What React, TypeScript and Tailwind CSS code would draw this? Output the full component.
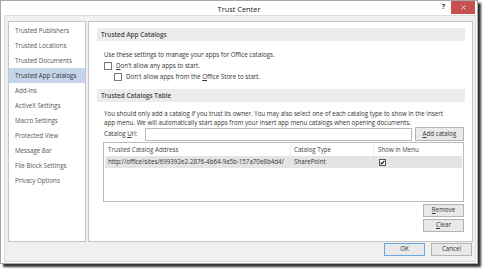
import type { ReactNode } from "react"

const navItems = [
  "Trusted Publishers",
  "Trusted Locations",
  "Trusted Documents",
  "Trusted App Catalogs",
  "Add-ins",
  "ActiveX Settings",
  "Macro Settings",
  "Protected View",
  "Message Bar",
  "File Block Settings",
  "Privacy Options",
]

function Key({ children }: { children: ReactNode }) {
  return <span className="underline decoration-[0.5px] underline-offset-[1px]">{children}</span>
}

function CheckBox({ checked = false }: { checked?: boolean }) {
  return (
    <span
      className={
        "flex shrink-0 items-center justify-center border bg-white " +
        (checked ? "size-[7px] border-[#555]" : "size-[8px] border-[#7a7a7a]")
      }
    >
      {checked && (
        <svg viewBox="0 0 8 8" className="size-[5px]">
          <path d="M1 4.2 L3 6.2 L7 1.5" fill="none" stroke="#111" strokeWidth="1.8" />
        </svg>
      )}
    </span>
  )
}

function Btn({ children, primary = false }: { children: ReactNode; primary?: boolean }) {
  return (
    <button
      className={
        "flex h-[13px] w-[41px] items-center justify-center border bg-[#e9e9e9] text-[6.2px] leading-none text-[#333] " +
        (primary ? "border-[#6aa6e0]" : "border-[#b4b4b4]")
      }
    >
      {children}
    </button>
  )
}

function SectionBar({ children }: { children: ReactNode }) {
  return (
    <div className="h-[13px] bg-[#ececec] pl-[4px] text-[6.4px] font-semibold leading-[13px] text-[#444]">
      {children}
    </div>
  )
}

export default function App() {
  return (
    <div className="h-[269px] w-[484px] overflow-hidden bg-white font-['Open_Sans',sans-serif] text-[6.2px] text-[#333]">
      <div className="flex h-[264px] w-[478px] flex-col border border-[#a8a8a8] bg-white shadow-[3px_3px_2px_rgba(0,0,0,0.8)]">
        {/* title bar */}
        <div className="grid h-[14px] shrink-0 grid-cols-[1fr_auto_1fr]">
          <div />
          <div className="pt-[2px] text-[7.4px] leading-[12px] text-[#222]">Trust Center</div>
          <div className="flex items-start justify-end pr-[2px]">
            <span className="mr-[6px] mt-[1px] text-[7px] font-bold leading-[10px] text-[#333]">?</span>
            <div className="flex h-[13px] w-[24px] items-center justify-center bg-[#c75050]">
              <svg viewBox="0 0 8 8" className="size-[5px]">
                <path d="M1 1 L7 7 M7 1 L1 7" stroke="#fff" strokeWidth="1.2" />
              </svg>
            </div>
          </div>
        </div>

        {/* client area */}
        <div className="mb-[1px] ml-[3px] mr-[1px] flex flex-1 flex-col border border-[#dcdcdc] bg-[#f0f0f0] pl-[3px] pr-[2px] pt-[5px]">
          <div className="flex h-[221px] gap-[2px]">
            {/* nav */}
            <div className="w-[78px] shrink-0 border border-[#c6c6c6] bg-white pt-[1px]">
              {navItems.map((item) => (
                <div
                  key={item}
                  className={
                    "h-[15px] pl-[6px] leading-[15px] " +
                    (item === "Trusted App Catalogs" ? "bg-[#c5d5ea] text-[#333]" : "text-[#555]")
                  }
                >
                  {item}
                </div>
              ))}
            </div>

            {/* main panel */}
            <div className="flex flex-1 flex-col border border-[#c6c6c6] bg-white pl-[8px] pr-[7px] pt-[6px]">
              <SectionBar>Trusted App Catalogs</SectionBar>
              <div className="flex flex-col pl-[7px] pt-[8px]">
                <div className="h-[11px] leading-[11px]">
                  Use these settings to manage your apps for Office catalogs.
                </div>
                <div className="flex h-[11px] items-center gap-[4px]">
                  <CheckBox />
                  <span>
                    <Key>D</Key>on't allow any apps to start.
                  </span>
                </div>
                <div className="flex h-[11px] items-center gap-[4px] pl-[10px]">
                  <CheckBox />
                  <span>
                    Don't allow apps from the <Key>O</Key>ffice Store to start.
                  </span>
                </div>
              </div>

              <div className="mt-[7px]">
                <SectionBar>Trusted Catalogs Table</SectionBar>
              </div>
              <div className="flex flex-col pl-[7px] pr-[1px]">
                <p className="mt-[7px] leading-[9px]">
                  You should only add a catalog if you trust its owner. You may also select one of each catalog type to show in the insert
                  <br />
                  app menu. We will automatically start apps from your insert app menu catalogs when opening documents.
                </p>
                <div className="flex h-[14px] items-center">
                  <span className="w-[41px] shrink-0">
                    Catalog <Key>U</Key>rl:
                  </span>
                  <div className="h-[13px] flex-1 border border-[#b9b9b9] bg-white" />
                  <div className="ml-[3px] flex h-[14px] w-[49px] items-center justify-center border border-[#b4b4b4] bg-[#e9e9e9]">
                    <Key>A</Key>dd catalog
                  </div>
                </div>

                {/* table */}
                <div className="-ml-[1px] mt-[1px] h-[60px] border border-[#bcbcbc] bg-white p-[1px]">
                  <div className="flex h-[12px] items-center text-[#444]">
                    <div className="h-full w-[186px] border-r border-[#ececec] pl-[3px] leading-[12px]">Trusted Catalog Address</div>
                    <div className="h-full w-[83px] border-r border-[#ececec] pl-[3px] leading-[12px]">Catalog Type</div>
                    <div className="h-full flex-1 pl-[4px] leading-[12px]">Show in Menu</div>
                  </div>
                  <div className="flex h-[12px] items-center bg-[#e4e4e4]">
                    <div className="w-[186px] pl-[3px]">http://office/sites/699392e2-2876-4b64-9a5b-157a70e8b4d4/</div>
                    <div className="w-[83px] pl-[3px]">SharePoint</div>
                    <div className="flex-1 pl-[5px]">
                      <CheckBox checked />
                    </div>
                  </div>
                </div>

                <div className="mt-[2px] flex flex-col items-end gap-[2px]">
                  <Btn>
                    <Key>R</Key>emove
                  </Btn>
                  <Btn>
                    <Key>C</Key>lear
                  </Btn>
                </div>
              </div>
            </div>
          </div>

          {/* footer */}
          <div className="mr-[1px] mt-[1px] flex justify-end gap-[6px]">
            <Btn primary>OK</Btn>
            <Btn>Cancel</Btn>
          </div>
        </div>
      </div>
    </div>
  )
}
